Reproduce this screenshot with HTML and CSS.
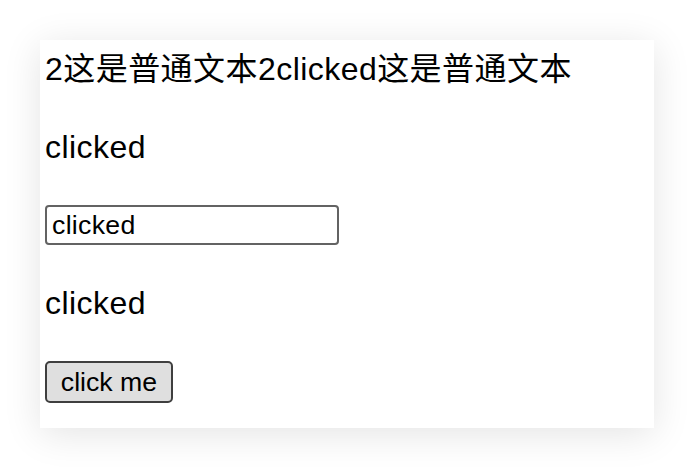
FILE: index.html
```html
<!DOCTYPE html>
<html lang="zh">
<head>
<meta charset="utf-8">
<link rel="stylesheet" href="styles.css">
</head>
<body>
<div class="card">
  <div class="line first">2这是普通文本2clicked这是普通文本</div>
  <p class="line">clicked</p>
  <input class="field" type="text" value="clicked">
  <p class="line">clicked</p>
  <div class="btn-row"><button class="btn">click me</button></div>
</div>
</body>
</html>
```
FILE: styles.css
```css
html, body {
  margin: 0;
  padding: 0;
  background: #ffffff;
}
body {
  padding: 40px;
  font-family: "Liberation Sans", Arial, "Noto Sans CJK SC", sans-serif;
  color: #000;
}
.card {
  box-sizing: border-box;
  width: 614px;
  height: 388px;
  background: #fff;
  box-shadow: 0 6px 36px rgba(0, 0, 0, 0.11);
  padding: 11px 5px 0 5px;
  display: flex;
  flex-direction: column;
  align-items: flex-start;
}
.line {
  margin: 0;
  font-size: 32px;
  line-height: 36px;
  height: 36px;
  letter-spacing: 0.45px;
  white-space: nowrap;
}
.first {
  margin-top: 0;
}
p.line {
  margin-top: 42px;
}
.field {
  box-sizing: border-box;
  margin: 40px 0 0 0;
  width: 294px;
  height: 40px;
  border: 2px solid #636363;
  border-radius: 4px;
  padding: 0 5px;
  font-family: "Liberation Sans", Arial, sans-serif;
  font-size: 26.67px;
  letter-spacing: 0.3px;
  color: #000;
  background: #fff;
  outline: none;
}
.field + p.line {
  margin-top: 40px;
}
.btn-row {
  margin-top: 40px;
}
.btn {
  box-sizing: border-box;
  width: 128px;
  height: 42px;
  margin: 0;
  padding: 0;
  border: 2px solid #3f3f3f;
  border-radius: 5px;
  background: #dfdfdf;
  font-family: "Liberation Sans", Arial, sans-serif;
  font-size: 26.67px;
  color: #000;
}
```
